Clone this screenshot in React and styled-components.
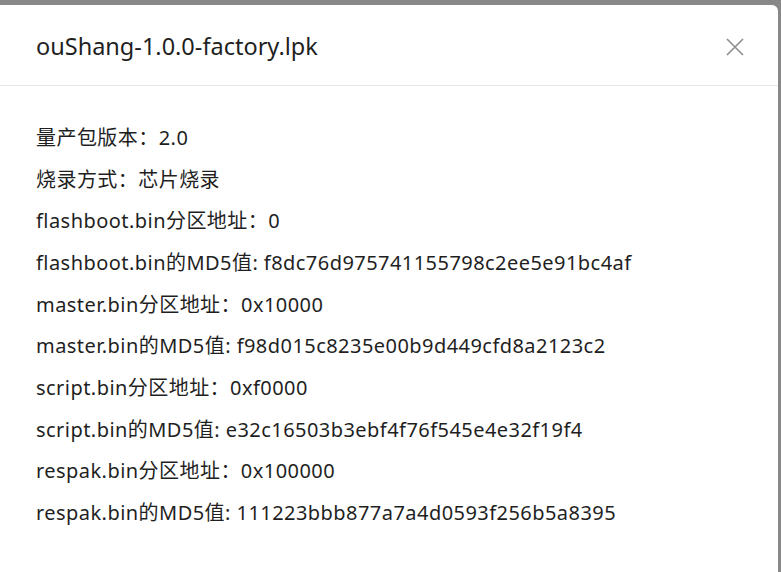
import React from "react";
import styled, { createGlobalStyle } from "styled-components";

const GlobalStyle = createGlobalStyle`
  html, body {
    margin: 0;
    padding: 0;
    background: #888888;
    overflow: hidden;
  }
  body {
    font-family: "Noto Sans", "Noto Sans CJK SC", sans-serif;
  }
`;

const items = [
  { label: "量产包版本：", value: "2.0" },
  { label: "烧录方式：", value: "芯片烧录" },
  { label: "flashboot.bin分区地址：", value: "0" },
  { label: "flashboot.bin的MD5值: ", value: "f8dc76d975741155798c2ee5e91bc4af" },
  { label: "master.bin分区地址：", value: "0x10000" },
  { label: "master.bin的MD5值: ", value: "f98d015c8235e00b9d449cfd8a2123c2" },
  { label: "script.bin分区地址：", value: "0xf0000" },
  { label: "script.bin的MD5值: ", value: "e32c16503b3ebf4f76f545e4e32f19f4" },
  { label: "respak.bin分区地址：", value: "0x100000" },
  { label: "respak.bin的MD5值: ", value: "111223bbb877a7a4d0593f256b5a8395" },
];

const App = () => {
  return (
    <>
      <GlobalStyle />
      <Backdrop>
        <Modal>
          <Header>
            <Title>ouShang-1.0.0-factory.lpk</Title>
            <CloseBtn aria-label="close">
              <svg width="18" height="18" viewBox="0 0 18 18">
                <path
                  d="M1 1 L17 17 M17 1 L1 17"
                  stroke="currentColor"
                  strokeWidth="1.6"
                  fill="none"
                />
              </svg>
            </CloseBtn>
          </Header>
          <Body>
            {items.map((it, i) => (
              <InfoRow key={i}>
                {it.label}
                {it.value}
              </InfoRow>
            ))}
          </Body>
        </Modal>
      </Backdrop>
    </>
  );
};

const Backdrop = styled.div`
  width: 781px;
  height: 572px;
  padding-top: 5px;
  box-sizing: border-box;
`;

const Modal = styled.div`
  width: 778px;
  height: 600px;
  background: #ffffff;
  border-top-right-radius: 6px;
`;

const Header = styled.div`
  height: 81px;
  display: flex;
  align-items: center;
  justify-content: space-between;
  padding: 2px 34px 0 36px;
  box-sizing: border-box;
  border-bottom: 1px solid #e8e8e8;
`;

const Title = styled.div`
  font-size: 23.5px;
  color: #1f1f1f;
  line-height: 30px;
`;

const CloseBtn = styled.button`
  border: none;
  background: transparent;
  padding: 2px 0 0;
  color: #8c8c8c;
  display: flex;
  cursor: pointer;
`;

const Body = styled.div`
  padding: 38px 36px 0;
`;

const InfoRow = styled.p`
  margin: 0 0 13.67px;
  font-size: 20px;
  letter-spacing: 0.45px;
  line-height: 28px;
  color: #1f1f1f;
  white-space: nowrap;
`;

export default App;
